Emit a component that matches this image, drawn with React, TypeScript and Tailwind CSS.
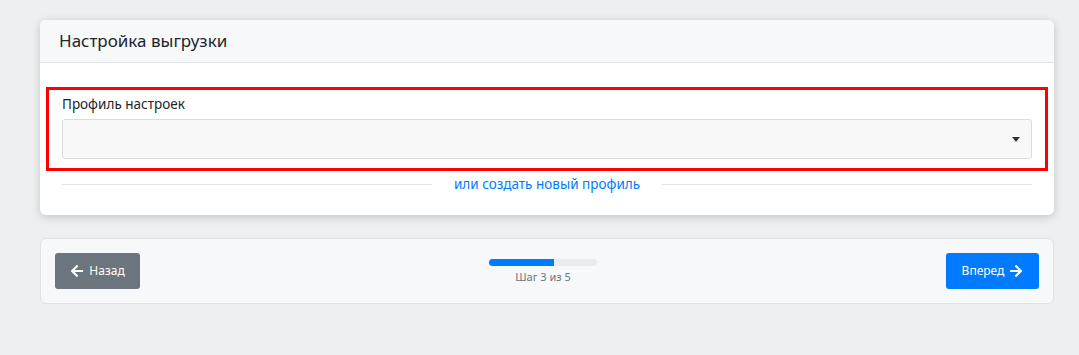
import React from 'react';
import { FaArrowLeft, FaArrowRight } from 'react-icons/fa';

const font = { fontFamily: '"Noto Sans", "Open Sans", sans-serif' };

const App: React.FC = () => {
  const step = 3;
  const total = 5;

  return (
    <div className="min-h-[355px] w-full bg-[#eeeff1] pt-5 pr-[25px] pl-10" style={font}>
      {/* settings card */}
      <div className="rounded-md bg-white shadow-[0_2px_10px_rgba(0,0,0,0.18)]">
        <div className="flex h-[43px] items-center rounded-t-md border-b border-[#dfe1e4] bg-[#f7f8f9] px-[19px]">
          <h2 className="text-[17px] text-[#212529]">Настройка выгрузки</h2>
        </div>
        <div className="px-[6px] pt-6 pb-[21px]">
          <div className="border-[3px] border-[#ff0000] px-[13px] pt-[5px] pb-[9px]">
            <label className="mb-[5px] block text-[13.5px] leading-[19px] text-[#212529]">Профиль настроек</label>
            <div className="flex h-10 items-center justify-end rounded-[3px] border border-[#dcdcdc] bg-[#f8f8f8] pr-[11px]">
              <span className="h-0 w-0 border-x-[4px] border-t-[5px] border-x-transparent border-t-[#333]" />
            </div>
          </div>
          <div className="mt-[3px] flex items-center px-4">
            <div className="h-px flex-1 bg-[#e2e3e5]" />
            <a className="px-[22px] text-[13.5px] leading-[20px] text-[#007bff]" href="#">или создать новый профиль</a>
            <div className="h-px flex-1 bg-[#e2e3e5]" />
          </div>
        </div>
      </div>

      {/* wizard navigation */}
      <div className="mt-[23px] flex h-[66px] items-center justify-between rounded-md border border-[#dfe1e4] bg-[#f7f8f9] px-[14px]">
        <button className="flex h-9 w-[85px] items-center justify-center gap-[5px] rounded-[3px] bg-[#6c757d] text-[12px] text-white">
          <FaArrowLeft className="h-[14px] w-[14px]" />
          Назад
        </button>
        <div className="flex flex-col items-center pt-[3px]">
          <div className="h-[7px] w-[108px] overflow-hidden rounded-full bg-[#e9ecef]">
            <div className="h-full bg-[#007bff]" style={{ width: `${(step / total) * 100}%` }} />
          </div>
          <span className="mt-[3px] text-[11px] text-[#6c757d]">Шаг {step} из {total}</span>
        </div>
        <button className="flex h-9 w-[93px] items-center justify-center gap-[5px] rounded-[3px] bg-[#007bff] text-[12px] text-white">
          Вперед
          <FaArrowRight className="h-[14px] w-[14px]" />
        </button>
      </div>
    </div>
  );
};

export default App;
